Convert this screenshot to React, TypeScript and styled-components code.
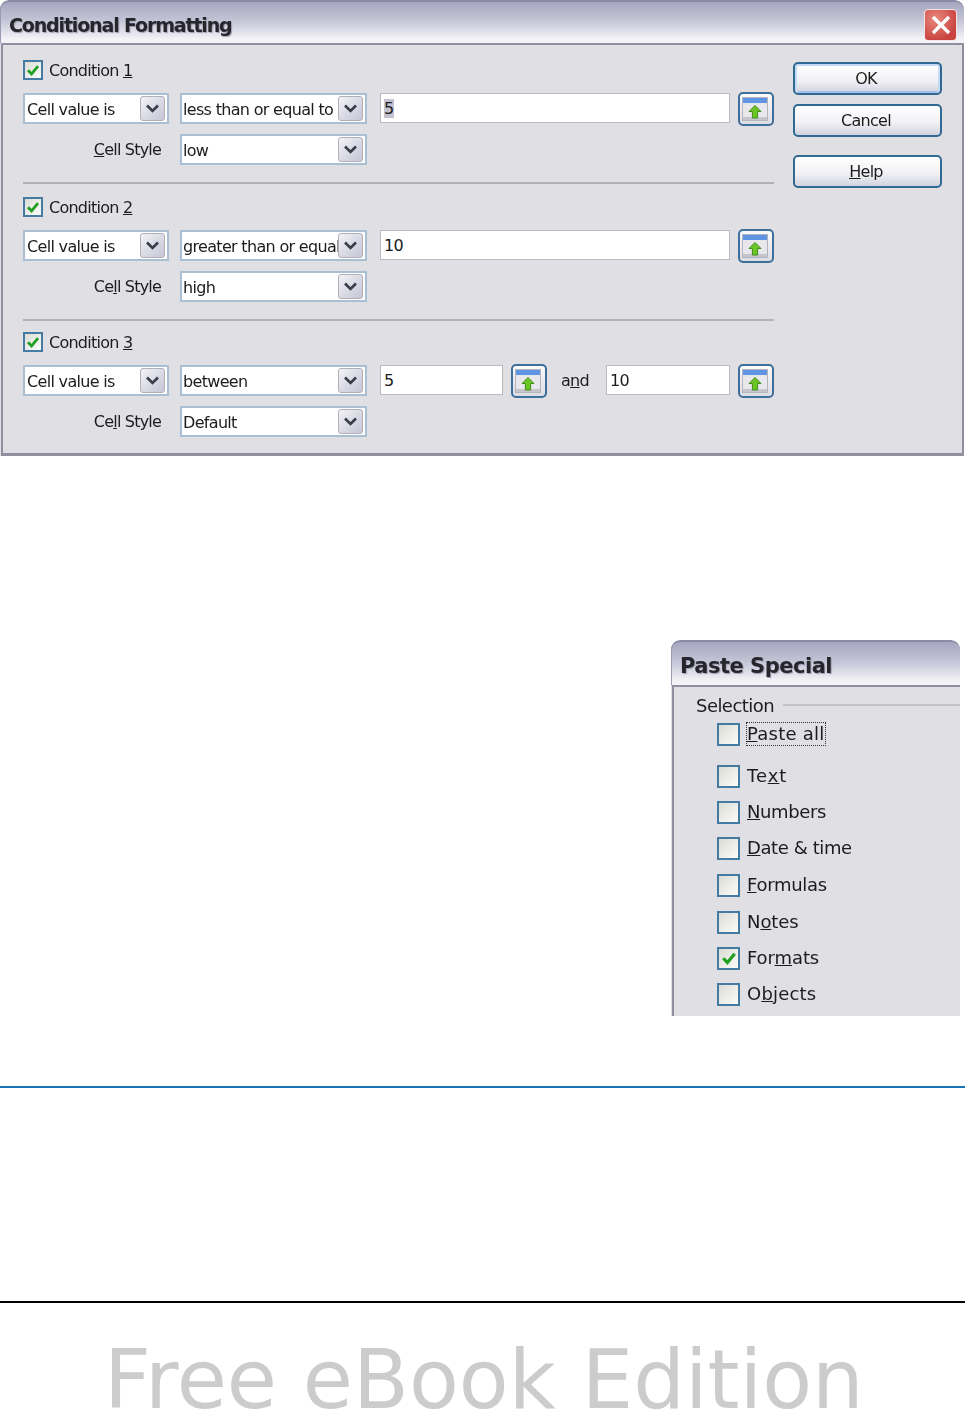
import React from 'react';
import styled, { createGlobalStyle } from 'styled-components';

const GlobalStyle = createGlobalStyle`
  html, body {
    margin: 0;
    padding: 0;
    background: #fff;
  }
`;

const Page = styled.div`
  width: 965px;
  height: 1412px;
  overflow: hidden;
  display: flex;
  flex-direction: column;
  font-family: "DejaVu Sans", sans-serif;
  color: #1c1c1c;
`;

const Window = styled.section`
  box-sizing: border-box;
  background: #e0dfe3;
  display: flex;
  flex-direction: column;
  flex: none;
  overflow: hidden;
  border-radius: 9px 9px 0 0;
  filter: blur(0.55px);
`;

const MainWindow = styled(Window)`
  width: 964px;
  height: 456px;
`;

const PasteWindow = styled(Window)`
  width: 289px;
  height: 376px;
  margin: 184px 0 0 671px;
`;

const TitleBar = styled.header<{ $height: number }>`
  box-sizing: border-box;
  height: ${p => p.$height}px;
  flex: none;
  display: flex;
  align-items: center;
  justify-content: space-between;
  padding: 4px 7px 0 9px;
  border-top: 2px solid #8a8aa6;
  border-radius: 9px 9px 0 0;
  background: linear-gradient(#a6a6c0, #c4c4d6 45%, #f4f4f8 92%);
  box-shadow: inset 1px 0 0 #9a9ab0;
`;

const TitleText = styled.h1<{ $spacing: number; $size: number }>`
  margin: 0;
  font-family: "DejaVu Sans", sans-serif;
  font-size: ${p => p.$size}px;
  font-weight: 700;
  letter-spacing: ${p => p.$spacing}px;
  color: #25252b;
  text-shadow: 1px 1px 1px #9c9cae;
  white-space: nowrap;
`;

const CloseButton = styled.button`
  width: 33px;
  height: 32px;
  padding: 0;
  display: flex;
  align-items: center;
  justify-content: center;
  border: 1px solid #f1e4e4;
  border-radius: 4px;
  background: radial-gradient(circle at 35% 30%, #e9897c, #c9433f 75%);
`;

const Frame = styled.div`
  box-sizing: border-box;
  flex: 1;
  min-height: 0;
  display: flex;
  justify-content: space-between;
  padding: 15px 20px 0 20px;
  border: 2px solid #8f8f9f;
  border-width: 2px 2px 3px 2px;
  margin-left: 1px;
`;

const Conditions = styled.div`
  width: 751px;
  display: flex;
  flex-direction: column;
`;

const ConditionGroup = styled.div<{ $last: boolean; $after: number }>`
  display: flex;
  flex-direction: column;
  padding-bottom: ${p => (p.$last ? 0 : 17)}px;
  margin-bottom: ${p => p.$after}px;
  border-bottom: ${p => (p.$last ? 'none' : '2px solid #b3b2b8')};
`;

const CheckRow = styled.label`
  height: 20px;
  display: flex;
  align-items: center;
  gap: 6px;
  margin-bottom: 13px;
  font-size: 16px;
  letter-spacing: -0.75px;
`;

const CheckBox = styled.span<{ $size: number }>`
  box-sizing: border-box;
  width: ${p => p.$size}px;
  height: ${p => p.$size}px;
  flex: none;
  display: flex;
  align-items: center;
  justify-content: center;
  border: 2px solid #447ba3;
  background: linear-gradient(135deg, #dcdcd6, #fbfbf9);
`;

const FieldRow = styled.div<{ $after: number }>`
  height: 31px;
  display: flex;
  align-items: flex-start;
  margin-bottom: ${p => p.$after}px;
`;

const StyleLabel = styled.span`
  width: 138px;
  margin-right: 19px;
  align-self: center;
  text-align: right;
  font-size: 16px;
  letter-spacing: -0.8px;
  white-space: nowrap;
`;

const Combo = styled.div<{ $width: number; $gap: number; $inset: number }>`
  box-sizing: border-box;
  width: ${p => p.$width}px;
  height: 31px;
  flex: none;
  margin-right: ${p => p.$gap}px;
  display: flex;
  align-items: center;
  justify-content: space-between;
  padding: 0 2px 0 ${p => p.$inset}px;
  background: #fff;
  border: 2px solid #a9c0d4;
  overflow: hidden;
  font-size: 16px;
  letter-spacing: -0.68px;
`;

const ComboValue = styled.span`
  flex: 1;
  min-width: 0;
  padding-top: 2px;
  overflow: hidden;
  white-space: nowrap;
`;

const ComboArrow = styled.span`
  box-sizing: border-box;
  width: 25px;
  height: 25px;
  flex: none;
  display: flex;
  align-items: center;
  justify-content: center;
  border: 1px solid #b0b0ba;
  border-radius: 3px;
  background: linear-gradient(135deg, #f2f2f6, #c5c5d6);
`;

const TextBox = styled.div<{ $width: number }>`
  box-sizing: border-box;
  width: ${p => p.$width}px;
  height: 30px;
  flex: none;
  display: flex;
  align-items: center;
  padding-left: 3px;
  background: #fff;
  border: 1px solid #bcbcbc;
  font-size: 16px;
  letter-spacing: -0.6px;
`;

const Selected = styled.span`
  background: #c3c3cf;
`;

const ShrinkButton = styled.button`
  box-sizing: border-box;
  width: 36px;
  height: 34px;
  flex: none;
  margin: -1px 0 0 8px;
  padding: 0 2px 0 0;
  display: flex;
  align-items: center;
  justify-content: center;
  border: 2px solid #3d6f9a;
  border-radius: 5px;
  background: linear-gradient(#fbfbfc, #dcdce4);
`;

const AndLabel = styled.span`
  width: 59px;
  padding-right: 3px;
  box-sizing: border-box;
  align-self: center;
  text-align: center;
  font-size: 16px;
  letter-spacing: -0.7px;
`;

const ActionColumn = styled.div`
  width: 149px;
  margin-top: 2px;
  display: flex;
  flex-direction: column;
`;

const ActionButton = styled.button<{ $after: number; $primary?: boolean }>`
  box-sizing: border-box;
  width: 149px;
  height: 33px;
  margin-bottom: ${p => p.$after}px;
  padding: 0 3px 0 0;
  font-family: inherit;
  font-size: 16px;
  letter-spacing: -0.7px;
  color: #1c1c1c;
  border: 2px solid #2f6a93;
  border-radius: 5px;
  background: linear-gradient(#fff, #f2f2f6 55%, #d3d3e0);
  box-shadow: ${p => (p.$primary ? 'inset 0 2px 0 #c6d9f5, inset 2px 0 0 #c6d9f5, inset -2px 0 0 #c6d9f5, inset 0 -2px 0 #a5bfe8' : 'none')};
`;

const PasteFrame = styled.div`
  box-sizing: border-box;
  flex: 1;
  min-height: 0;
  display: flex;
  flex-direction: column;
  padding: 8px 0 0 22px;
  border-left: 2px solid #8f8f9f;
  border-top: 2px solid #8f8f9f;
  margin-left: 1px;
`;

const GroupHeading = styled.div`
  height: 20px;
  display: flex;
  align-items: center;
  gap: 9px;
  font-size: 18px;
  letter-spacing: -0.55px;
`;

const HeadingRule = styled.span`
  flex: 1;
  height: 2px;
  background: #c4c3c9;
`;

const OptionList = styled.div`
  display: flex;
  flex-direction: column;
  padding: 7px 0 0 21px;
`;

const OptionRow = styled.label<{ $after: number }>`
  height: 24px;
  flex: none;
  display: flex;
  align-items: center;
  gap: 7px;
  margin-bottom: ${p => p.$after}px;
  font-size: 18px;
`;

const OptionText = styled.span<{ $focused?: boolean; $spacing: number }>`
  letter-spacing: ${p => p.$spacing}px;
  outline: ${p => (p.$focused ? '1px dotted #333' : 'none')};
  line-height: 22px;
`;

const BlueRule = styled.hr`
  margin: 70px 0 0;
  height: 2px;
  flex: none;
  border: 0;
  background: #1b75b5;
`;

const BlackRule = styled.hr`
  margin: 213px 0 0;
  height: 2px;
  flex: none;
  border: 0;
  background: #000;
`;

const Watermark = styled.div`
  margin-top: 52px;
  padding-left: 104px;
  font-family: "DejaVu Sans", sans-serif;
  font-size: 81.5px;
  line-height: 50px;
  color: #cccccc;
  white-space: nowrap;
`;

const Tick = ({ size }: { size: number }) => (
  <svg width={size} height={size} viewBox="0 0 14 14">
    <path d="M2 7.2 L5.6 11 L12 3.2" fill="none" stroke="#21a121" strokeWidth="2.8" />
  </svg>
);

const Chevron = () => (
  <svg width="15" height="11" viewBox="0 0 15 11">
    <path d="M2 2.5 L7.5 8 L13 2.5" fill="none" stroke="#3b3b4a" strokeWidth="2.6" />
  </svg>
);

const CloseIcon = () => (
  <svg width="20" height="20" viewBox="0 0 20 20">
    <path d="M2 2 L18 18 M18 2 L2 18" stroke="#fff" strokeWidth="3.4" />
  </svg>
);

const ShrinkIcon = () => (
  <svg width="26" height="26" viewBox="0 0 26 26">
    <rect x="0.5" y="1.5" width="25" height="23" fill="#e8e8ec" stroke="#b4b4bc" />
    <rect x="1" y="2" width="24" height="5" fill="#5f95e2" />
    <rect x="1" y="21" width="24" height="3" fill="#c5c5cd" />
    <path d="M13 9.5 L19 15.5 L15.6 15.5 L15.6 22 L10.4 22 L10.4 15.5 L7 15.5 Z" fill="#6cc426" stroke="#3f8f16" strokeWidth="1" />
  </svg>
);

type ConditionRow = {
  number: string;
  operator: string;
  style: string;
  styleKey: 'C' | 'l';
  first: string;
  second?: string;
  selected?: boolean;
  after: number;
};

const conditions: ConditionRow[] = [
  { number: '1', operator: 'less than or equal to', style: 'low', styleKey: 'C', first: '5', selected: true, after: 13 },
  { number: '2', operator: 'greater than or equal to', style: 'high', styleKey: 'l', first: '10', after: 11 },
  { number: '3', operator: 'between', style: 'Default', styleKey: 'l', first: '5', second: '10', after: 0 },
];

const options: { before: string; key: string; after: string; gap: number; spacing: number; checked?: boolean; focused?: boolean }[] = [
  { before: '', key: 'P', after: 'aste all', gap: 18, spacing: 0.25, focused: true },
  { before: 'Te', key: 'x', after: 't', gap: 12, spacing: 1 },
  { before: '', key: 'N', after: 'umbers', gap: 12, spacing: -0.4 },
  { before: '', key: 'D', after: 'ate & time', gap: 13, spacing: -0.4 },
  { before: '', key: 'F', after: 'ormulas', gap: 13, spacing: -0.3 },
  { before: 'N', key: 'o', after: 'tes', gap: 12, spacing: -0.1 },
  { before: 'For', key: 'm', after: 'ats', gap: 12, spacing: -0.1, checked: true },
  { before: 'O', key: 'b', after: 'jects', gap: 0, spacing: 0.2 },
];

function ConditionBlock({ item, last }: { item: ConditionRow; last: boolean }) {
  return (
    <ConditionGroup $last={last} $after={item.after}>
      <CheckRow>
        <CheckBox $size={20}><Tick size={14} /></CheckBox>
        <span>Condition <u>{item.number}</u></span>
      </CheckRow>
      <FieldRow $after={10}>
        <Combo $width={146} $gap={11} $inset={2}>
          <ComboValue>Cell value is</ComboValue>
          <ComboArrow><Chevron /></ComboArrow>
        </Combo>
        <Combo $width={187} $gap={13} $inset={1}>
          <ComboValue>{item.operator}</ComboValue>
          <ComboArrow><Chevron /></ComboArrow>
        </Combo>
        {item.second ? (
          <>
            <TextBox $width={123}>{item.first}</TextBox>
            <ShrinkButton><ShrinkIcon /></ShrinkButton>
            <AndLabel>a<u>n</u>d</AndLabel>
            <TextBox $width={124}>{item.second}</TextBox>
            <ShrinkButton><ShrinkIcon /></ShrinkButton>
          </>
        ) : (
          <>
            <TextBox $width={350}>{item.selected ? <Selected>{item.first}</Selected> : item.first}</TextBox>
            <ShrinkButton><ShrinkIcon /></ShrinkButton>
          </>
        )}
      </FieldRow>
      <FieldRow $after={0}>
        <StyleLabel>
          {item.styleKey === 'C' ? <><u>C</u>ell Style</> : <>Ce<u>l</u>l Style</>}
        </StyleLabel>
        <Combo $width={187} $gap={0} $inset={1}>
          <ComboValue>{item.style}</ComboValue>
          <ComboArrow><Chevron /></ComboArrow>
        </Combo>
      </FieldRow>
    </ConditionGroup>
  );
}

export default function App() {
  return (
    <Page>
      <GlobalStyle />
      <MainWindow>
        <TitleBar $height={43}>
          <TitleText $size={19} $spacing={-1.15}>Conditional Formatting</TitleText>
          <CloseButton><CloseIcon /></CloseButton>
        </TitleBar>
        <Frame>
          <Conditions>
            {conditions.map((item, i) => (
              <ConditionBlock key={item.number} item={item} last={i === conditions.length - 1} />
            ))}
          </Conditions>
          <ActionColumn>
            <ActionButton $after={9} $primary>OK</ActionButton>
            <ActionButton $after={18}>Cancel</ActionButton>
            <ActionButton $after={0}><u>H</u>elp</ActionButton>
          </ActionColumn>
        </Frame>
      </MainWindow>

      <PasteWindow>
        <TitleBar $height={45}>
          <TitleText $size={21} $spacing={-0.5}>Paste Special</TitleText>
        </TitleBar>
        <PasteFrame>
          <GroupHeading>
            <span>Selection</span>
            <HeadingRule />
          </GroupHeading>
          <OptionList>
            {options.map(o => (
              <OptionRow key={o.key + o.after} $after={o.gap}>
                <CheckBox $size={23}>{o.checked && <Tick size={16} />}</CheckBox>
                <OptionText $focused={o.focused} $spacing={o.spacing}>{o.before}<u>{o.key}</u>{o.after}</OptionText>
              </OptionRow>
            ))}
          </OptionList>
        </PasteFrame>
      </PasteWindow>

      <BlueRule />
      <BlackRule />
      <Watermark>Free eBook Edition</Watermark>
    </Page>
  );
}
